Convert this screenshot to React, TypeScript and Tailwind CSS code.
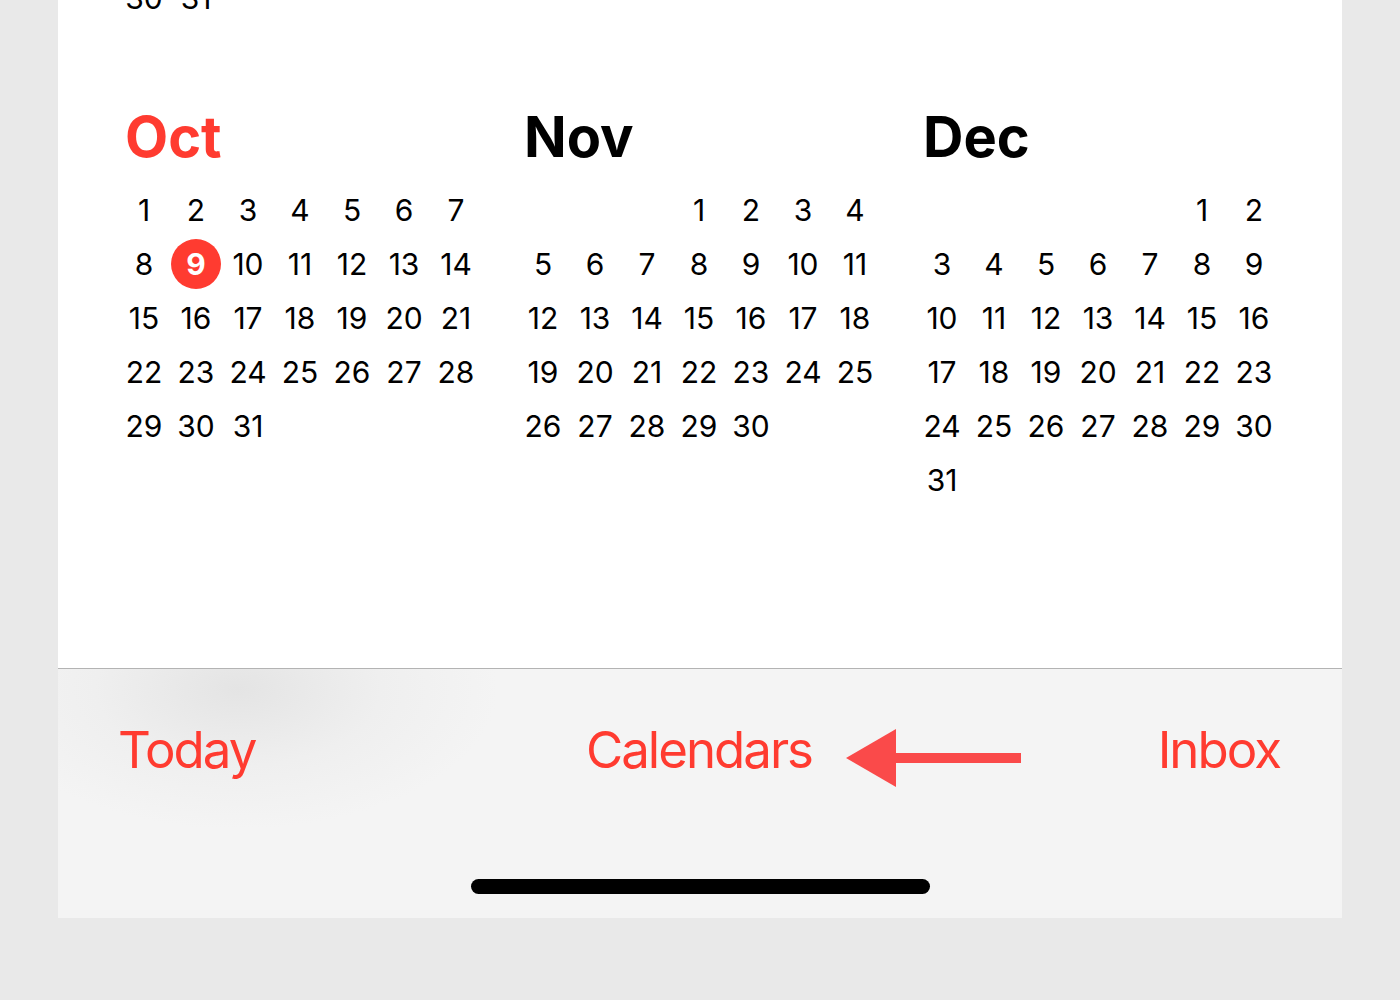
import React from 'react';

interface Month {
  name: string;
  offset: number; // weekday of the 1st, Sunday = 0
  days: number;
}

const months: Month[] = [
  { name: 'Oct', offset: 0, days: 31 },
  { name: 'Nov', offset: 3, days: 30 },
  { name: 'Dec', offset: 5, days: 31 },
];

// last week of July, scrolled mostly out of view
const julyTail = [30, 31];

// Today is highlighted in the current month
const current = { month: 'Oct', day: 9 };

function DayCell({ children }: { children?: React.ReactNode }) {
  return <div className="flex h-[54px] w-[52px] items-center justify-center">{children}</div>;
}

function MonthBlock({ month }: { month: Month }) {
  const cells: (number | null)[] = [
    ...Array.from({ length: month.offset }, () => null),
    ...Array.from({ length: month.days }, (_, i) => i + 1),
  ];
  const isCurrent = month.name === current.month;

  return (
    <div className="w-[364px]">
      <h2
        className={`pl-[7px] text-[56px] leading-[64px] font-bold ${
          isCurrent ? 'text-[#ff3b30]' : 'text-black'
        }`}
      >
        {month.name}
      </h2>
      <div className="mt-[14px] grid h-[324px] grid-cols-7 content-start">
        {cells.map((day, i) => (
          <DayCell key={i}>
            {day !== null &&
              (isCurrent && day === current.day ? (
                <span className="flex h-[50px] w-[50px] items-center justify-center rounded-full bg-[#ff3b30] text-[30px] font-bold text-white">
                  {day}
                </span>
              ) : (
                <span className="text-[30px] leading-[54px] text-black">{day}</span>
              ))}
          </DayCell>
        ))}
      </div>
    </div>
  );
}

function Toolbar() {
  return (
    <div className="relative flex h-[250px] flex-col border-t border-[#b3b3b3] bg-[#f5f5f5] bg-[radial-gradient(ellipse_260px_140px_at_180px_20px,#e4e4e4_0%,#efefef_55%,#f4f4f4_100%)]">
      <div className="mt-[51px] grid grid-cols-3 pl-[60px] pr-[62px] text-[51px] leading-[60px] tracking-[-2px] text-[#ff3b30]">
        <span className="justify-self-start">Today</span>
        <span className="justify-self-center">Calendars</span>
        <span className="justify-self-end">Inbox</span>
      </div>

      {/* pointer next to the Calendars button */}
      <svg
        className="absolute left-[788px] top-[60px]"
        width="175"
        height="58"
        viewBox="0 0 175 58"
      >
        <polygon points="0,29 50,0 50,58" fill="#fa4a4a" />
        <rect x="48" y="24" width="127" height="10" fill="#fa4a4a" />
      </svg>

      <div className="mt-auto mb-[24px] flex justify-center">
        <div className="h-[15px] w-[459px] rounded-full bg-black" />
      </div>
    </div>
  );
}

export default function App() {
  return (
    <div className="h-[1000px] overflow-hidden bg-[#e9e9e9] font-['Inter','Noto_Sans',sans-serif]">
      <div className="ml-[58px] w-[1284px]">
        <div className="h-[668px] overflow-hidden bg-white pl-[60px]">
          <div className="mt-[-29px] flex">
            {julyTail.map((d) => (
              <DayCell key={d}>
                <span className="text-[30px] leading-[54px] text-black">{d}</span>
              </DayCell>
            ))}
          </div>
          <div className="mt-[80px] flex gap-[35px]">
            {months.map((m) => (
              <MonthBlock key={m.name} month={m} />
            ))}
          </div>
        </div>
        <Toolbar />
      </div>
    </div>
  );
}
